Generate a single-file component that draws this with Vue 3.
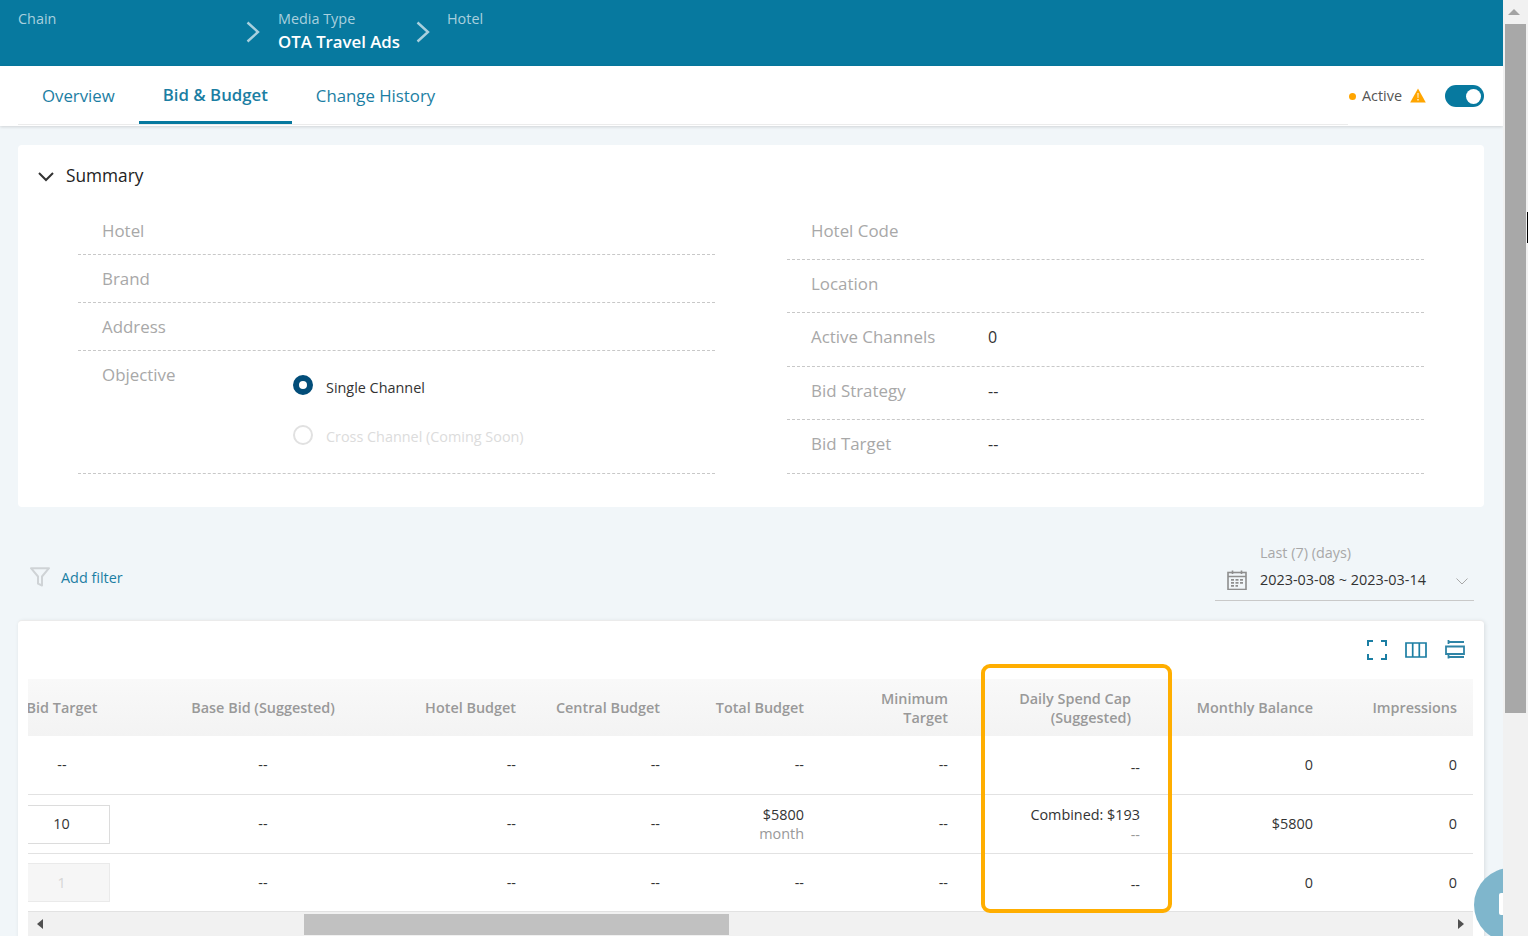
<script setup>
const leftRows = ['Hotel', 'Brand', 'Address']
const rightRows = [
  { label: 'Hotel Code', value: '' },
  { label: 'Location', value: '' },
  { label: 'Active Channels', value: '0' },
  { label: 'Bid Strategy', value: '--' },
  { label: 'Bid Target', value: '--' }
]
const headers = [
  { text: 'Bid Target', cls: 'center' },
  { text: 'Base Bid (Suggested)', cls: 'center' },
  { text: 'Hotel Budget' },
  { text: 'Central Budget' },
  { text: 'Total Budget' },
  { text: 'Minimum Target', cls: 'narrow' },
  { text: 'Daily Spend Cap (Suggested)', cls: 'cap' },
  { text: 'Monthly Balance' },
  { text: 'Impressions' }
]
const rows = [
  { input: '--', total: ['--'], cap: ['--'], balance: '0' },
  { input: '10', total: ['$5800', 'month'], cap: ['Combined: $193', '--'], balance: '$5800' },
  { input: '1', total: ['--'], cap: ['--'], balance: '0' }
]
</script>

<template>
  <div class="shell">
    <div class="page">
      <header class="top">
        <div class="crumb c1"><span class="crumb-label">Chain</span></div>
        <svg class="crumb-arrow" width="16" height="22" viewBox="0 0 16 22"><path d="M2.5 1.5l10.5 9.5-10.5 9.5" fill="none" stroke="#a9d0de" stroke-width="2.4"/></svg>
        <div class="crumb c2"><span class="crumb-label">Media Type</span><span class="crumb-value">OTA Travel Ads</span></div>
        <svg class="crumb-arrow" width="16" height="22" viewBox="0 0 16 22"><path d="M2.5 1.5l10.5 9.5-10.5 9.5" fill="none" stroke="#a9d0de" stroke-width="2.4"/></svg>
        <div class="crumb c3"><span class="crumb-label">Hotel</span></div>
      </header>

      <nav class="tabbar">
        <div class="tabs">
          <a class="tab">Overview</a>
          <a class="tab on">Bid &amp; Budget</a>
          <a class="tab">Change History</a>
        </div>
        <div class="status">
          <i class="dot"></i>
          <span class="status-text">Active</span>
          <svg class="warn" width="16" height="15" viewBox="0 0 16 15"><path d="M8 0.5L15.8 14.5H0.2z" fill="#ffa500"/><path d="M7.3 5h1.4l-.2 5h-1z M7.2 11h1.6v1.6H7.2z" fill="#ffe9bf"/></svg>
          <span class="toggle"><i></i></span>
        </div>
      </nav>

      <main class="main">
        <section class="summary">
          <div class="summary-head">
            <svg width="16" height="10" viewBox="0 0 16 10"><path d="M1 1l7 7 7-7" fill="none" stroke="#333" stroke-width="2"/></svg>
            <span>Summary</span>
          </div>
          <div class="summary-cols">
            <div class="col col-left">
              <div v-for="r in leftRows" :key="r" class="frow"><span class="flabel">{{ r }}</span></div>
              <div class="frow objective">
                <span class="flabel">Objective</span>
                <div class="radios">
                  <label class="radio"><i class="rmark checked"></i><span>Single Channel</span></label>
                  <label class="radio off"><i class="rmark"></i><span>Cross Channel (Coming Soon)</span></label>
                </div>
              </div>
            </div>
            <div class="col col-right">
              <div v-for="r in rightRows" :key="r.label" class="frow">
                <span class="flabel">{{ r.label }}</span>
                <span class="fvalue">{{ r.value }}</span>
              </div>
            </div>
          </div>
        </section>

        <div class="filterbar">
          <div class="addfilter">
            <svg width="20" height="20" viewBox="0 0 20 20"><path d="M1 1.2h18l-7 8.3v9l-4-1.8v-7.2z" fill="none" stroke="#cfd3d6" stroke-width="2" stroke-linejoin="round"/></svg>
            <span>Add filter</span>
          </div>
          <div class="range">
            <svg class="cal" width="20" height="20" viewBox="0 0 20 20" fill="none" stroke="#8e8e8e">
              <rect x="1" y="2.5" width="18" height="17" stroke-width="1.6"/>
              <path d="M1 6.5h18M5.5 .5v3.5M14.5 .5v3.5" stroke-width="1.6"/>
              <path d="M4 9.8h12M4 12.8h12M4 15.8h7" stroke-width="1.8" stroke-dasharray="3 1.5"/>
            </svg>
            <div class="range-text">
              <span class="range-label">Last (7) (days)</span>
              <span class="range-date">2023-03-08 ~ 2023-03-14</span>
            </div>
            <svg class="range-chev" width="12" height="7" viewBox="0 0 12 7"><path d="M.5.5L6 6l5.5-5.5" fill="none" stroke="#a8a8a8"/></svg>
          </div>
        </div>

        <section class="tablecard">
          <div class="tools">
            <svg class="t-full" width="20" height="20" viewBox="0 0 20 20" fill="none" stroke="#1b7ea3" stroke-width="2"><path d="M1 6V1h5M14 1h5v5M19 14v5h-5M6 19H1v-5"/></svg>
            <svg class="t-cols" width="22" height="16" viewBox="0 0 22 16" fill="none" stroke="#1b7ea3" stroke-width="1.7"><path d="M1 1h20v14H1zM7.7 1v14M14.3 1v14"/></svg>
            <svg class="t-dens" width="20" height="19" viewBox="0 0 20 19" fill="none" stroke="#2f84a6" stroke-width="1.8"><path d="M3.5 0v4M3.5 2H19M19 6.5H1V14h18zM3.5 14.5v4M3.5 17H19"/></svg>
          </div>
          <div class="tablewrap">
            <div class="grid headrow">
              <div v-for="h in headers" :key="h.text" class="th" :class="h.cls">{{ h.text }}</div>
            </div>
            <div v-for="(r, i) in rows" :key="i" class="grid row" :class="{ last: i === 2 }">
              <div class="td center">
                <span v-if="i === 0">{{ r.input }}</span>
                <span v-else class="inp" :class="{ disabled: i === 2 }">{{ r.input }}</span>
              </div>
              <div class="td center">--</div>
              <div class="td">--</div>
              <div class="td">--</div>
              <div class="td">
                <span class="first">{{ r.total[0] }}</span>
                <span v-if="r.total[1]" class="sub month">{{ r.total[1] }}</span>
              </div>
              <div class="td">--</div>
              <div class="td" :class="{ low: !r.cap[1] }">
                <span class="first">{{ r.cap[0] }}</span>
                <span v-if="r.cap[1]" class="sub">{{ r.cap[1] }}</span>
              </div>
              <div class="td">{{ r.balance }}</div>
              <div class="td">0</div>
            </div>
            <div class="hscroll">
              <i class="arrow-l"></i>
              <div class="hthumb"></div>
              <i class="arrow-r"></i>
            </div>
          </div>
        </section>
      </main>

      <div class="highlight"></div>
      <div class="chat"><i></i></div>
    </div>

    <aside class="vscroll">
      <i class="arrow-u"></i>
      <div class="vthumb"></div>
    </aside>
    <i class="cursor"></i>
  </div>
</template>

<style>
html, body { margin: 0; overflow: hidden; }
</style>

<style scoped>
.shell {
  position: relative;
  display: flex;
  width: 1528px;
  height: 936px;
  overflow: hidden;
  font-family: "Open Sans", "Noto Sans", sans-serif;
  font-size: 14.4px;
  color: #333;
  background: #f1f6f9;
}
.page { position: relative; width: 1503px; height: 936px; overflow: hidden; flex: none; }

.top {
  display: flex;
  align-items: center;
  height: 66px;
  padding-left: 18px;
  box-sizing: border-box;
  background: #07799f;
}
.crumb { display: flex; flex-direction: column; align-self: flex-start; padding-top: 9px; }
.c1 { width: 227px; }
.c2 { width: 137px; margin-left: 17px; }
.c3 { margin-left: 16px; }
.crumb-arrow { flex: none; margin-top: -2px; }
.crumb-label { line-height: 20px; color: #a9d0de; }
.crumb-value { font-size: 16.8px; font-weight: 600; line-height: 26px; color: #fff; }

.tabbar {
  position: relative;
  display: flex;
  justify-content: space-between;
  height: 60px;
  padding: 0 19px 0 18px;
  background: #fff;
  box-shadow: 0 1px 3px rgba(0, 0, 0, .14);
}
.tabs { display: flex; width: 1330px; height: 59px; box-sizing: border-box; border-bottom: 1px solid #ececec; }
.tab {
  display: flex;
  align-items: center;
  height: 59px;
  box-sizing: border-box;
  padding: 0 24px 1px;
  font-size: 16.8px;
  color: #1b7ea3;
}
.tab.on { font-weight: 600; border-bottom: 3px solid #07799f; padding-top: 2px; padding-bottom: 0; margin-top: -1px; }
.status { display: flex; align-items: center; height: 58px; }
.dot { width: 7px; height: 7px; border-radius: 50%; background: #ffa500; margin-top: 3px; }
.status-text { margin-left: 6px; color: #555; }
.warn { margin-left: 8px; margin-top: 1px; }
.toggle {
  display: flex;
  align-items: center;
  justify-content: flex-end;
  width: 39px;
  height: 22px;
  margin-left: 19px;
  margin-top: 2px;
  padding-right: 3px;
  box-sizing: border-box;
  border-radius: 11px;
  background: #07799f;
}
.toggle i { width: 15px; height: 15px; border-radius: 50%; background: #fff; }

.main { padding: 19px 19px 0 18px; }
.summary { height: 362px; background: #fff; border-radius: 4px; box-sizing: border-box; }
.summary-head { display: flex; align-items: center; gap: 12px; padding: 19px 0 0 20px; height: 24px; font-size: 17.3px; font-weight: 500; line-height: 22px; color: #222; }
.summary-head svg { margin-top: 1px; }
.summary-head span { margin-top: -1px; }
.summary-cols { display: flex; justify-content: space-between; padding: 19px 60px 0; }
.col { width: 637px; }
.col-right { margin-top: -.4px; }
.frow {
  display: flex;
  align-items: flex-start;
  box-sizing: border-box;
  border-bottom: 1px dashed #c8c8c8;
  padding-left: 24px;
}
.col-left .frow { height: 48px; padding-top: 12px; }
.col-right .frow { height: 53.4px; padding-top: 12px; }
.flabel { width: 177px; flex: none; font-size: 16.9px; line-height: 24px; color: #a8a8a8; }
.col-left .flabel { width: 191px; }
.fvalue { font-size: 16px; line-height: 24px; color: #333; }
.frow.objective { height: 123px !important; }
.radios { display: flex; flex-direction: column; padding-top: 12px; }
.radio { display: flex; align-items: center; height: 20px; gap: 13px; margin-bottom: 30px; }
.radio span { position: relative; top: 2px; }
.radio.off span { top: 1px; }
.radio.off { color: #dcdcdc; }
.rmark { width: 20px; height: 20px; box-sizing: border-box; border-radius: 50%; border: 2px solid #e1e1e1; }
.rmark.checked { border: 6px solid #024d79; }

.filterbar { display: flex; justify-content: space-between; height: 113px; padding-right: 10px; box-sizing: border-box; }
.addfilter { display: flex; align-items: center; gap: 11px; padding: 60px 0 0 12px; height: 20px; color: #1b7ea3; }
.range {
  display: flex;
  align-items: flex-end;
  width: 259px;
  height: 57px;
  margin-top: 37px;
  padding: 0 6px 10px 12px;
  box-sizing: border-box;
  border-bottom: 1px solid #c9c9c9;
}
.cal { flex: none; }
.range-text { display: flex; flex-direction: column; margin-left: 13px; width: 184px; flex: none; white-space: nowrap; }
.range-label { line-height: 20px; color: #a8a8a8; margin-bottom: 7px; }
.range-date { line-height: 20px; }
.range-chev { flex: none; margin: 0 0 5px 12px; }

.tablecard {
  position: relative;
  height: 340px;
  padding: 0 10px;
  box-sizing: border-box;
  background: #fff;
  border-radius: 4px;
  box-shadow: 1px 1px 4px rgba(0, 0, 0, .1);
  border-top: 1px solid #ebebeb;
}
.tools { display: flex; justify-content: flex-end; align-items: center; gap: 18px; height: 58px; padding: 0 9px 0 0; box-sizing: border-box; }
.t-dens { margin-top: -2px; }
.tablewrap { overflow: hidden; width: 1445px; }
.grid { display: grid; grid-template-columns: 152px 250px 144px 144px 144px 144px 192px 173px 144px; margin-left: -42px; width: 1487px; }
.headrow { height: 57px; background: linear-gradient(#f9f9f9, #f3f3f3); }
.th {
  display: flex;
  align-items: center;
  justify-content: flex-end;
  padding-right: 16px;
  font-weight: 600;
  color: #999;
  text-align: right;
  line-height: 19px;
}
.th.center { justify-content: center; padding: 0; }
.th.narrow { padding-left: 60px; }
.th.cap { padding-left: 30px; padding-right: 25px; }
.row { height: 59px; border-bottom: 1px solid #e2e2e2; box-sizing: border-box; }
.row.last { height: 58px; }
.td {
  display: flex;
  flex-direction: column;
  align-items: flex-end;
  justify-content: center;
  padding-right: 16px;
  line-height: 20px;
}
.td.center { align-items: center; padding: 0; }
.td.low { padding-top: 5px; box-sizing: border-box; }
.first:not(:only-child) { line-height: 22px; }
.sub { color: #999; line-height: 18px; }
.month { position: relative; top: -1px; }
.inp {
  display: block;
  width: 96px;
  height: 39px;
  margin-left: -1px;
  line-height: 35px;
  box-sizing: border-box;
  text-align: center;
  border: 1px solid #dcdcdc;
}
.inp.disabled { line-height: 37px; background: #f6f6f6; color: #d5d5d5; border-color: #eaeaea; }

.hscroll { position: relative; height: 24px; background: #f1f1f1; }
.hthumb { position: absolute; left: 276px; top: 2px; width: 425px; height: 21px; background: #c1c1c1; }
.arrow-l, .arrow-r { position: absolute; top: 7px; width: 0; height: 0; border-top: 5.5px solid transparent; border-bottom: 5.5px solid transparent; }
.arrow-l { left: 9px; border-right: 6px solid #505050; }
.arrow-r { right: 9px; border-left: 6px solid #505050; }

.highlight {
  position: absolute;
  left: 981px;
  top: 664px;
  width: 191px;
  height: 249px;
  box-sizing: border-box;
  border: 4px solid #ffae00;
  border-radius: 9px;
}
.chat {
  position: absolute;
  left: 1474px;
  top: 868px;
  width: 74px;
  height: 74px;
  border-radius: 50%;
  background: #7fb6cc;
}
.chat i { position: absolute; left: 25px; top: 25px; width: 12px; height: 22px; background: #fff; border-radius: 2px; }

.vscroll { position: relative; width: 25px; height: 936px; background: #f1f1f1; flex: none; }
.vthumb { position: absolute; left: 2px; top: 24px; width: 21px; height: 689px; background: #a8a8a8; }
.arrow-u { position: absolute; left: 5px; top: 9px; width: 0; height: 0; border-left: 6px solid transparent; border-right: 6px solid transparent; border-bottom: 6px solid #a3a3a3; }
.cursor { position: absolute; left: 1527px; top: 212px; width: 1px; height: 31px; background: #000; }
</style>
